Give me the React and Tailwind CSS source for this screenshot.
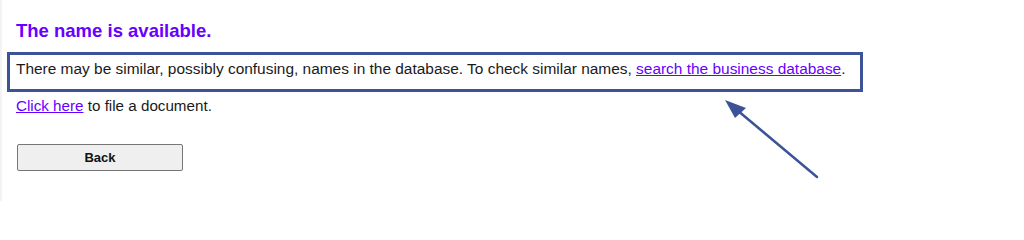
export default function App() {
  return (
    <div className="relative h-[201px] w-full border-l-[2px] border-[#f3f3f3] bg-white font-['Liberation_Sans',Arial,sans-serif] text-[#1a1a1a]">
      <div className="pl-[14px] pt-[20px]">
        <h3 className="text-[18.5px] leading-[22px] font-bold text-[#6600ff]">The name is available.</h3>
        <div className="mt-[10px] -ml-[9px] w-[856px] border-[3px] border-[#3d5398] pl-[6px] pt-[5px] pb-[12px] text-[15.45px] leading-[17px]">
          There may be similar, possibly confusing, names in the database. To check similar names,{" "}
          <a href="#" className="text-[#6600ff] underline">search the business database</a>.
        </div>
        <p className="mt-[5px] text-[15.2px] leading-[17px]">
          <a href="#" className="text-[#6600ff] underline">Click here</a> to file a document.
        </p>
        <button className="mt-[30px] ml-[1px] flex h-[27px] w-[166px] items-center justify-center rounded-[2px] border border-[#767676] bg-[#efefef] text-[13px] font-bold text-[#111]">
          Back
        </button>
      </div>
      <svg className="absolute left-0 top-0" width="1024" height="207" viewBox="0 0 1024 207" style={{ left: -2 }}>
        <line x1="817" y1="177" x2="737" y2="110" stroke="#3d5398" strokeWidth="2.5" strokeLinecap="round" />
        <polygon points="725,100 746,108 735,118" fill="#3d5398" />
      </svg>
    </div>
  );
}
